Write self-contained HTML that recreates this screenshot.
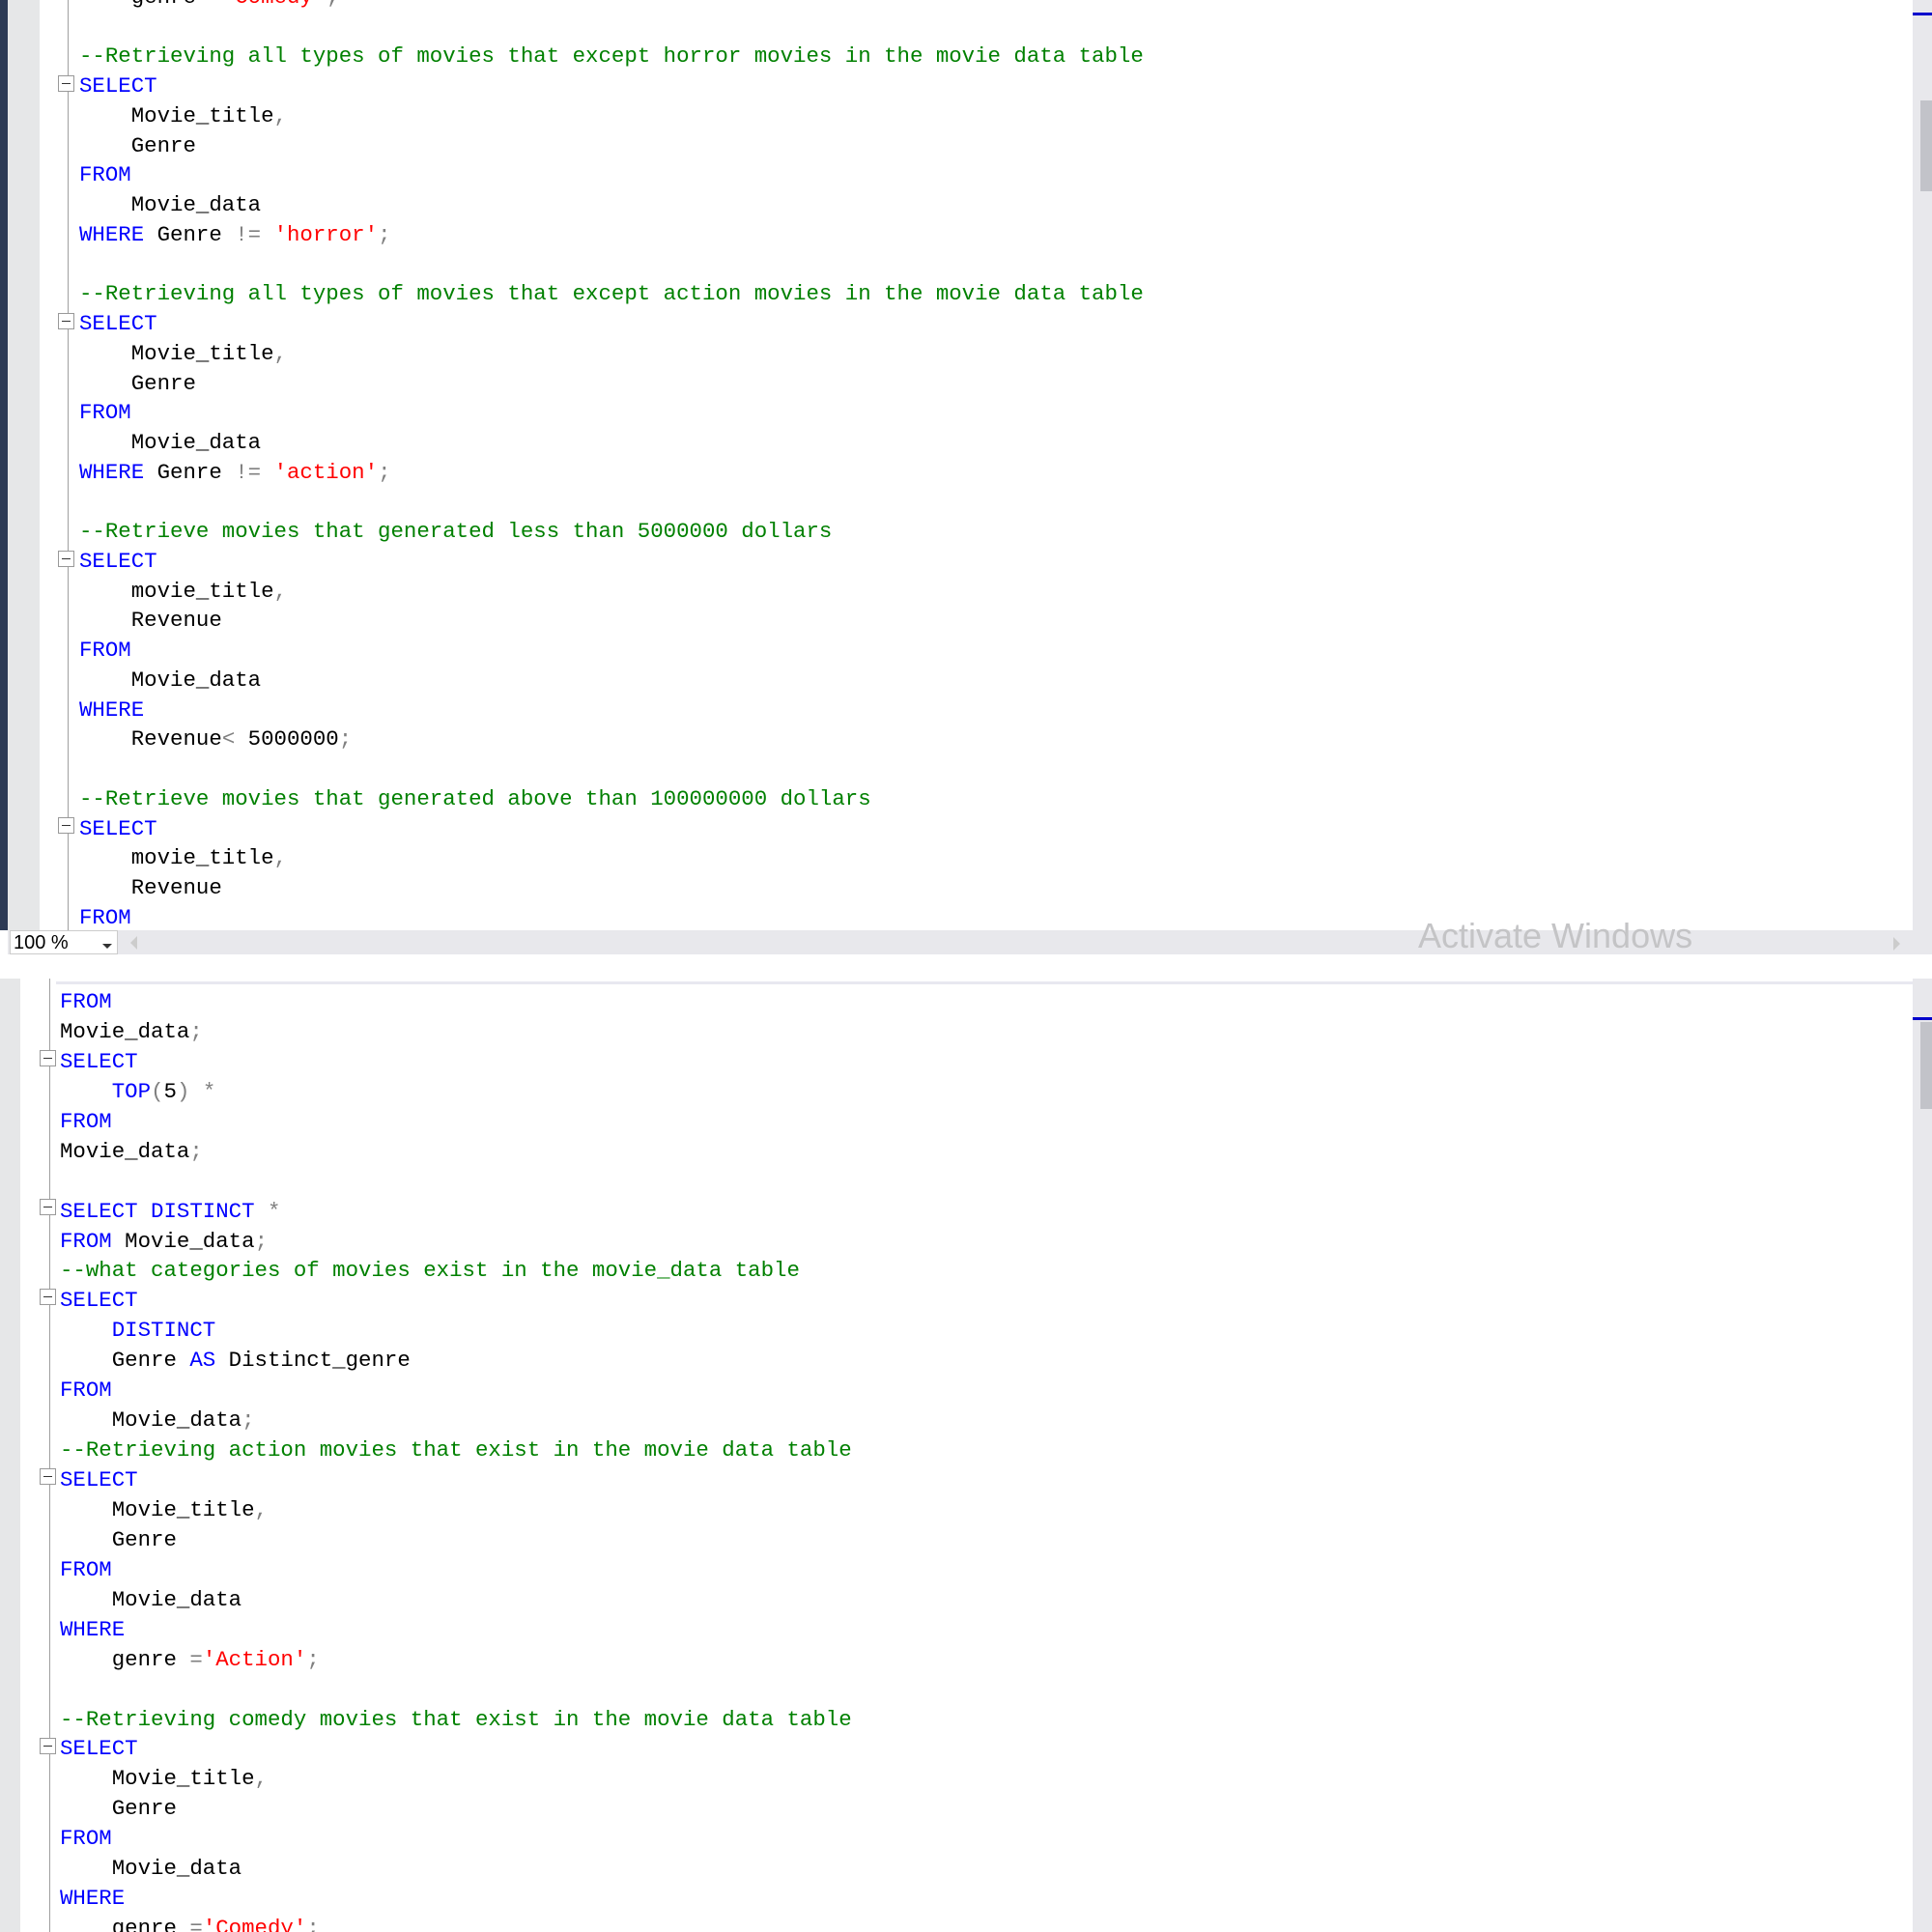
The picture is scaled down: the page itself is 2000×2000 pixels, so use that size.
<!DOCTYPE html>
<html><head><meta charset="utf-8"><style>
*{margin:0;padding:0;box-sizing:border-box}
body{width:2000px;height:2000px;background:#fff;position:relative;overflow:hidden;font-family:"Liberation Mono",monospace;font-size:22.4px}
.pane{position:absolute;left:0;right:0;overflow:hidden}
.code{position:absolute;white-space:pre;color:#000}
.k{color:#0000ff}.c{color:#008000}.s{color:#ff0000}.o{color:#808080}
.fold{position:absolute;width:17px;height:17px;border:1px solid #999;background:#fff}
.fold:after{content:"";position:absolute;left:3px;right:3px;top:7px;height:1px;background:#333}
.vl{position:absolute;width:1px;background:#a0a0a0}
</style></head><body>
<div class="pane" style="top:0;height:963px">
 <div style="position:absolute;left:0;top:0;width:8px;height:988px;background:#2d3a55"></div>
 <div style="position:absolute;left:8px;top:0;width:33px;height:963px;background:#e6e7e8"></div>
 <div class="vl" style="left:70px;top:0;height:963px"></div>
 <div class="code" style="left:82px;top:-18px;line-height:30.74px">    genre =<span class="s">'Comedy'</span><span class="o">;</span>

<span class="c">--Retrieving all types of movies that except horror movies in the movie data table</span>
<span class="k">SELECT</span>
    Movie_title<span class="o">,</span>
    Genre
<span class="k">FROM</span>
    Movie_data
<span class="k">WHERE</span> Genre <span class="o">!=</span> <span class="s">'horror'</span><span class="o">;</span>

<span class="c">--Retrieving all types of movies that except action movies in the movie data table</span>
<span class="k">SELECT</span>
    Movie_title<span class="o">,</span>
    Genre
<span class="k">FROM</span>
    Movie_data
<span class="k">WHERE</span> Genre <span class="o">!=</span> <span class="s">'action'</span><span class="o">;</span>

<span class="c">--Retrieve movies that generated less than 5000000 dollars</span>
<span class="k">SELECT</span>
    movie_title<span class="o">,</span>
    Revenue
<span class="k">FROM</span>
    Movie_data
<span class="k">WHERE</span>
    Revenue<span class="o">&lt;</span> 5000000<span class="o">;</span>

<span class="c">--Retrieve movies that generated above than 100000000 dollars</span>
<span class="k">SELECT</span>
    movie_title<span class="o">,</span>
    Revenue
<span class="k">FROM</span></div>
 <div class="fold" style="left:60px;top:78px"></div>
 <div class="fold" style="left:60px;top:324px"></div>
 <div class="fold" style="left:60px;top:570px"></div>
 <div class="fold" style="left:60px;top:846px"></div>
 <div style="position:absolute;left:1980px;top:0;width:20px;height:963px;background:#e8e8ec"></div>
 <div style="position:absolute;left:1980px;top:13px;width:20px;height:3px;background:#0000cc"></div>
 <div style="position:absolute;left:1988px;top:104px;width:12px;height:94px;background:#c2c3c9"></div>
</div>
<div style="position:absolute;left:8px;top:963px;width:1992px;height:25px;background:#e8e8ec"></div>
<div style="position:absolute;left:10px;top:963px;width:112px;height:25px;background:#fff;border:1px solid #ccc;font-family:'Liberation Sans',sans-serif;font-size:20px;line-height:24px;padding-left:3px">100 %</div>
<div style="position:absolute;left:106px;top:977px;width:0;height:0;border-left:5px solid transparent;border-right:5px solid transparent;border-top:5px solid #333"></div>
<div style="position:absolute;left:135px;top:969px;width:0;height:0;border-top:7px solid transparent;border-bottom:7px solid transparent;border-right:7px solid #ccc"></div>
<div style="position:absolute;left:1960px;top:970px;width:0;height:0;border-top:7px solid transparent;border-bottom:7px solid transparent;border-left:7px solid #ccc"></div>
<div style="position:absolute;left:1468px;top:948px;font-family:'Liberation Sans',sans-serif;font-size:36px;color:#c4c4c6;white-space:nowrap">Activate Windows</div>
<div class="pane" style="top:1013px;height:987px">
 <div style="position:absolute;left:0;top:0;width:21px;height:987px;background:#e6e7e8"></div>
 <div style="position:absolute;left:58px;top:3px;width:1922px;height:3px;background:#e8e8f0"></div>
 <div class="vl" style="left:51px;top:0;height:987px"></div>
 <div class="code" style="left:62px;top:9px;line-height:30.93px"><span class="k">FROM</span>
Movie_data<span class="o">;</span>
<span class="k">SELECT</span>
    <span class="k">TOP</span><span class="o">(</span>5<span class="o">)</span> <span class="o">*</span>
<span class="k">FROM</span>
Movie_data<span class="o">;</span>

<span class="k">SELECT DISTINCT</span> <span class="o">*</span>
<span class="k">FROM</span> Movie_data<span class="o">;</span>
<span class="c">--what categories of movies exist in the movie_data table</span>
<span class="k">SELECT</span>
    <span class="k">DISTINCT</span>
    Genre <span class="k">AS</span> Distinct_genre
<span class="k">FROM</span>
    Movie_data<span class="o">;</span>
<span class="c">--Retrieving action movies that exist in the movie data table</span>
<span class="k">SELECT</span>
    Movie_title<span class="o">,</span>
    Genre
<span class="k">FROM</span>
    Movie_data
<span class="k">WHERE</span>
    genre <span class="o">=</span><span class="s">'Action'</span><span class="o">;</span>

<span class="c">--Retrieving comedy movies that exist in the movie data table</span>
<span class="k">SELECT</span>
    Movie_title<span class="o">,</span>
    Genre
<span class="k">FROM</span>
    Movie_data
<span class="k">WHERE</span>
    genre <span class="o">=</span><span class="s">'Comedy'</span><span class="o">;</span></div>
 <div class="fold" style="left:41px;top:74px"></div>
 <div class="fold" style="left:41px;top:228px"></div>
 <div class="fold" style="left:41px;top:321px"></div>
 <div class="fold" style="left:41px;top:507px"></div>
 <div class="fold" style="left:41px;top:786px"></div>
 <div style="position:absolute;left:1980px;top:0;width:20px;height:987px;background:#e8e8ec"></div>
 <div style="position:absolute;left:1980px;top:40px;width:20px;height:3px;background:#0000cc"></div>
 <div style="position:absolute;left:1988px;top:45px;width:12px;height:90px;background:#c2c3c9"></div>
</div>
</body></html>
